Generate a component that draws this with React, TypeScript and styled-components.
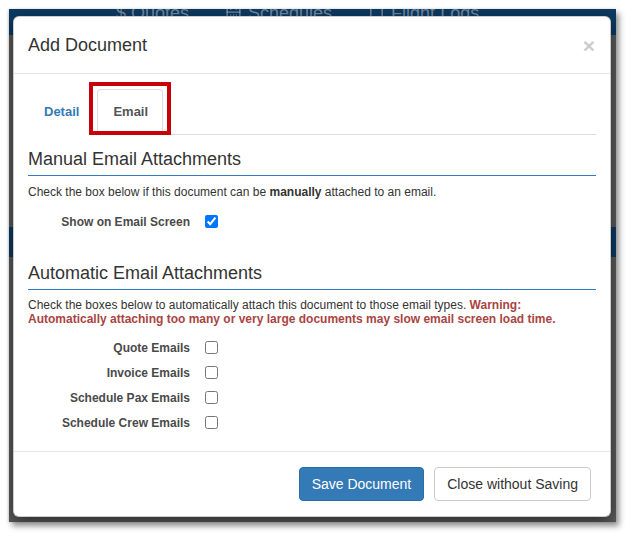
import React, { useState } from "react";
import styled, { createGlobalStyle } from "styled-components";
import { CalendarDays, Book } from "lucide-react";

const GlobalStyle = createGlobalStyle`
  html, body {
    margin: 0;
    padding: 0;
    background: #fff;
  }
  body {
    font-family: "Liberation Sans", Arial, Helvetica, sans-serif;
    color: #333;
  }
  * { box-sizing: border-box; }
`;

const Frame = styled.div`
  width: 633px;
  height: 540px;
  padding: 9px 0 0 9px;
  overflow: hidden;
`;

const Screen = styled.div`
  width: 607px;
  height: 513px;
  display: grid;
  overflow: hidden;
  background: #5a5a5a;
  box-shadow: 3px 4px 6px rgba(0, 0, 0, 0.45), -1px 0 2px rgba(0, 0, 0, 0.15);
  & > * {
    grid-area: 1 / 1;
  }
`;

const DimPage = styled.div`
  display: flex;
  flex-direction: column;
`;

const NavBar = styled.div`
  height: 26px;
  background: #0d3a62;
  display: flex;
  align-items: flex-start;
  gap: 36px;
  padding-left: 107px;
  overflow: hidden;
`;

const NavItem = styled.span`
  display: flex;
  align-items: center;
  gap: 6px;
  margin-top: -6px;
  font-size: 18px;
  color: rgba(200, 205, 212, 0.55);
  white-space: nowrap;
`;

const Band = styled.div`
  height: 30px;
  margin-top: 192px;
  background: #0d3a62;
`;

const Modal = styled.div`
  align-self: start;
  justify-self: start;
  margin: 7px 0 0 4px;
  width: 598px;
  background: #fff;
  border: 1px solid rgba(0, 0, 0, 0.2);
  border-radius: 6px;
  box-shadow: 0 5px 15px rgba(0, 0, 0, 0.5);
  display: flex;
  flex-direction: column;
`;

const Header = styled.div`
  display: flex;
  justify-content: space-between;
  align-items: center;
  padding: 16px 15px 15px 14px;
  border-bottom: 1px solid #e5e5e5;
`;

const Title = styled.h4`
  margin: 0;
  font-size: 18px;
  font-weight: 400;
  line-height: 25px;
  color: #333;
`;

const Close = styled.button`
  border: 0;
  background: none;
  padding: 0;
  font-family: inherit;
  font-size: 21px;
  font-weight: 700;
  line-height: 1;
  color: #000;
  opacity: 0.2;
  cursor: pointer;
`;

const Body = styled.div`
  padding: 15px 14px 16px 14px;
`;

const Tabs = styled.ul`
  list-style: none;
  margin: 0;
  padding: 0;
  display: flex;
  border-bottom: 1px solid #ddd;
`;

const Tab = styled.li`
  position: relative;
  margin-right: 3px;
  margin-bottom: -1px;
`;

const TabLink = styled.a<{ $active?: boolean }>`
  display: block;
  padding: 12px 14px 12px 15px;
  line-height: 20px;
  font-size: 13px;
  font-weight: 700;
  text-decoration: none;
  border: 1px solid ${(p) => (p.$active ? "#ddd" : "transparent")};
  border-bottom-color: ${(p) => (p.$active ? "#fff" : "transparent")};
  border-radius: 4px 4px 0 0;
  background: #fff;
  color: ${(p) => (p.$active ? "#555" : "#337ab7")};
  cursor: pointer;
`;

const Callout = styled.span`
  position: absolute;
  top: -7px;
  left: -8px;
  right: -8px;
  bottom: 0;
  border: 4px solid #c8000a;
  pointer-events: none;
`;

const SectionTitle = styled.h3<{ $gap: number }>`
  margin: ${(p) => p.$gap}px 0 0;
  padding-bottom: 5px;
  font-size: 18px;
  font-weight: 400;
  line-height: 22px;
  color: #333;
  border-bottom: 1px solid #2f7cc0;
`;

const Note = styled.p<{ $lh: number }>`
  margin: 8px 0 0;
  font-size: 12px;
  line-height: ${(p) => p.$lh}px;
  color: #333;
`;

const Warning = styled.b`
  color: #a94442;
`;

const Options = styled.div`
  margin-top: 9px;
  display: grid;
  grid-template-columns: 162px auto;
  grid-auto-rows: 25px;
  column-gap: 15px;
  align-items: center;
`;

const OptionLabel = styled.label`
  text-align: right;
  font-size: 12px;
  font-weight: 700;
  color: #4a4a4a;
`;

const Check = styled.input`
  justify-self: start;
  width: 13px;
  height: 13px;
  margin: 0;
`;

const Footer = styled.div`
  display: flex;
  justify-content: flex-end;
  gap: 10px;
  padding: 15px 19px 15px 15px;
  border-top: 1px solid #e5e5e5;
`;

const Button = styled.button<{ $primary?: boolean }>`
  padding: 6px 12px;
  font-family: inherit;
  font-size: 14px;
  line-height: 20px;
  border-radius: 4px;
  border: 1px solid ${(p) => (p.$primary ? "#2e6da4" : "#ccc")};
  background: ${(p) => (p.$primary ? "#337ab7" : "#fff")};
  color: ${(p) => (p.$primary ? "#fff" : "#333")};
  cursor: pointer;
`;

const autoTypes = [
  "Quote Emails",
  "Invoice Emails",
  "Schedule Pax Emails",
  "Schedule Crew Emails",
];

export default function App() {
  const [tab, setTab] = useState("email");
  const [showOnEmail, setShowOnEmail] = useState(true);
  const [auto, setAuto] = useState<Record<string, boolean>>({});

  return (
    <>
      <GlobalStyle />
      <Frame>
        <Screen>
          <DimPage>
            <NavBar>
              <NavItem>$ Quotes</NavItem>
              <NavItem>
                <CalendarDays size={17} />
                Schedules
              </NavItem>
              <NavItem>
                <Book size={17} />
                Flight Logs
              </NavItem>
            </NavBar>
            <Band />
          </DimPage>

          <Modal>
            <Header>
              <Title>Add Document</Title>
              <Close>×</Close>
            </Header>
            <Body>
              <Tabs>
                <Tab>
                  <TabLink $active={tab === "detail"} onClick={() => setTab("detail")}>
                    Detail
                  </TabLink>
                </Tab>
                <Tab>
                  <TabLink $active={tab === "email"} onClick={() => setTab("email")}>
                    Email
                  </TabLink>
                  <Callout />
                </Tab>
              </Tabs>

              <SectionTitle $gap={13}>Manual Email Attachments</SectionTitle>
              <Note $lh={16}>
                Check the box below if this document can be <b>manually</b> attached to an email.
              </Note>
              <Options>
                <OptionLabel htmlFor="show-email">Show on Email Screen</OptionLabel>
                <Check
                  id="show-email"
                  type="checkbox"
                  checked={showOnEmail}
                  onChange={(e) => setShowOnEmail(e.target.checked)}
                />
              </Options>

              <SectionTitle $gap={28}>Automatic Email Attachments</SectionTitle>
              <Note $lh={14}>
                Check the boxes below to automatically attach this document to those email types.{" "}
                <Warning>
                  Warning: Automatically attaching too many or very large documents may slow email
                  screen load time.
                </Warning>
              </Note>
              <Options>
                {autoTypes.map((t) => (
                  <React.Fragment key={t}>
                    <OptionLabel htmlFor={t}>{t}</OptionLabel>
                    <Check
                      id={t}
                      type="checkbox"
                      checked={!!auto[t]}
                      onChange={(e) => setAuto({ ...auto, [t]: e.target.checked })}
                    />
                  </React.Fragment>
                ))}
              </Options>
            </Body>
            <Footer>
              <Button $primary>Save Document</Button>
              <Button>Close without Saving</Button>
            </Footer>
          </Modal>
        </Screen>
      </Frame>
    </>
  );
}
